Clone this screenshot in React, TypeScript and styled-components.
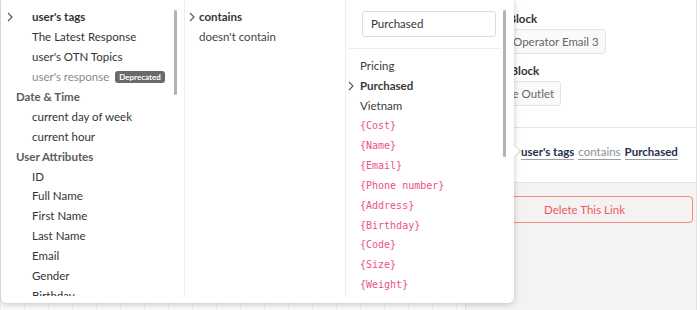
import styled, { createGlobalStyle } from "styled-components";

const GlobalStyle = createGlobalStyle`
  body {
    margin: 0;
    overflow: hidden;
    font-family: Lato, "Liberation Sans", sans-serif;
    background: #ffffff;
  }
`;

const Page = styled.div`
  position: relative;
  display: flex;
  width: 700px;
  height: 310px;
  overflow: hidden;
`;

const Canvas = styled.div`
  flex: 0 0 465px;
  background-color: #f8f8f8;
  background-image: linear-gradient(to right, #ececec 1px, transparent 1px),
    linear-gradient(to bottom, #ececec 1px, transparent 1px);
  background-size: 24px 24px;
`;

const SidePanel = styled.div`
  flex: 0 0 230px;
  display: flex;
  flex-direction: column;
  border-left: 1px solid #e2e2e2;
  border-right: 1px solid #e2e2e2;
  background: #f4f2f3;
`;

const BlockSection = styled.div`
  background: #fff;
  padding: 11px 10px 21px 12px;
  border-bottom: 1px solid #e6e6e6;
`;

const BlockLabel = styled.div<{ $gap?: number }>`
  margin-top: ${(p) => p.$gap ?? 0}px;
  font-size: 11.5px;
  line-height: 16px;
  font-weight: 700;
  color: #333;
  white-space: nowrap;
`;

const Pill = styled.div`
  display: inline-block;
  margin-top: 2px;
  padding: 0 6px;
  height: 23px;
  line-height: 23px;
  font-size: 11.5px;
  color: #666;
  background: #fafafa;
  border: 1px solid #e3e3e3;
  border-radius: 3px;
  white-space: nowrap;
`;

const ConditionRow = styled.div`
  background: #fff;
  height: 55px;
  box-sizing: border-box;
  display: flex;
  align-items: center;
  gap: 4px;
  padding: 0 0 6px 55px;
  border-bottom: 1px solid #e6e6e6;
  font-size: 11.5px;
`;

const Token = styled.span<{ $muted?: boolean }>`
  color: ${(p) => (p.$muted ? "#8b8f96" : "#25304a")};
  font-weight: ${(p) => (p.$muted ? 400 : 700)};
  border-bottom: 1px solid #9aa0aa;
  line-height: 15px;
`;

const ActionArea = styled.div`
  padding: 13px 3px 0 10px;
`;

const DeleteButton = styled.button`
  width: 100%;
  height: 27px;
  border: 1px solid #f08a80;
  border-radius: 4px;
  background: transparent;
  color: #ea5b5b;
  font-family: Lato, "Liberation Sans", sans-serif;
  font-size: 11.5px;
`;

const Popover = styled.div`
  position: absolute;
  left: 1px;
  top: -3px;
  width: 513px;
  height: 306px;
  display: flex;
  background: #fff;
  border-radius: 6px;
  box-shadow: 0 1px 6px rgba(0, 0, 0, 0.22);
`;

const Arrow = styled.div`
  position: absolute;
  right: -5px;
  top: 149px;
  width: 9px;
  height: 9px;
  background: #fff;
  transform: rotate(45deg);
  border-top: 1px solid #d8d8d8;
  border-right: 1px solid #d8d8d8;
`;

const Column = styled.div<{ $width: number; $divider?: boolean }>`
  position: relative;
  flex: 0 0 ${(p) => p.$width}px;
  height: 299px;
  overflow: hidden;
  border-right: ${(p) => (p.$divider ? "1px solid #eeeeee" : "none")};
`;

const ScrollThumb = styled.div<{ $top: number; $height: number; $right: number }>`
  position: absolute;
  right: ${(p) => p.$right}px;
  top: ${(p) => p.$top}px;
  width: 3px;
  height: ${(p) => p.$height}px;
  background: #b3b3b3;
  border-radius: 2px;
`;

const List = styled.div<{ $top: number }>`
  padding-top: ${(p) => p.$top}px;
`;

const Row = styled.div<{ $indent: number; $tone?: string; $bold?: boolean }>`
  position: relative;
  display: flex;
  align-items: center;
  gap: 6px;
  height: 19.9px;
  padding-left: ${(p) => p.$indent}px;
  font-size: 11.5px;
  color: ${(p) => p.$tone ?? "#333"};
  font-weight: ${(p) => (p.$bold ? 700 : 400)};
  white-space: nowrap;
`;

const Caret = styled.svg<{ $left: number }>`
  position: absolute;
  left: ${(p) => p.$left}px;
  top: 5px;
`;

const Badge = styled.span`
  display: inline-block;
  padding: 0 4px;
  height: 12px;
  line-height: 12px;
  font-size: 8px;
  font-weight: 700;
  color: #fff;
  background: #6a6a6a;
  border-radius: 3px;
`;

const Code = styled.span`
  font-family: "DejaVu Sans Mono", "Liberation Mono", monospace;
  font-size: 10px;
  color: #ec4f8c;
`;

const SearchWrap = styled.div`
  padding: 14px 6px 11px 14px;
  border-bottom: 1px solid #eeeeee;
  margin: 0 12px 0 2px;
`;

const SearchInput = styled.div`
  box-sizing: border-box;
  width: 134px;
  height: 26px;
  line-height: 24px;
  padding-left: 8px;
  border: 1px solid #dcdcdc;
  border-radius: 3px;
  font-size: 11.5px;
  color: #333;
`;

const CaretIcon = ({ left }: { left: number }) => (
  <Caret $left={left} width="6" height="10" viewBox="0 0 6 10">
    <path d="M1 1l4 4-4 4" fill="none" stroke="#555" strokeWidth="1.1" />
  </Caret>
);

type Entry = {
  label: string;
  kind: "header" | "item";
  bold?: boolean;
  selected?: boolean;
  deprecated?: boolean;
};

const attributes: Entry[] = [
  { label: "user's tags", kind: "item", bold: true, selected: true },
  { label: "The Latest Response", kind: "item" },
  { label: "user's OTN Topics", kind: "item" },
  { label: "user's response", kind: "item", deprecated: true },
  { label: "Date & Time", kind: "header" },
  { label: "current day of week", kind: "item" },
  { label: "current hour", kind: "item" },
  { label: "User Attributes", kind: "header" },
  { label: "ID", kind: "item" },
  { label: "Full Name", kind: "item" },
  { label: "First Name", kind: "item" },
  { label: "Last Name", kind: "item" },
  { label: "Email", kind: "item" },
  { label: "Gender", kind: "item" },
  { label: "Birthday", kind: "item" },
];

const values = ["Pricing", "Purchased", "Vietnam"];
const variables = ["Cost", "Name", "Email", "Phone number", "Address", "Birthday", "Code", "Size", "Weight"];

export default function App() {
  return (
    <>
      <GlobalStyle />
      <Page>
        <Canvas />
        <SidePanel>
          <BlockSection>
            <BlockLabel>Email Block</BlockLabel>
            <Pill>Send Operator Email 3</Pill>
            <BlockLabel $gap={9}>Menu Block</BlockLabel>
            <Pill>Simple Outlet</Pill>
          </BlockSection>
          <ConditionRow>
            <Token>user's tags</Token>
            <Token $muted>contains</Token>
            <Token>Purchased</Token>
          </ConditionRow>
          <ActionArea>
            <DeleteButton>Delete This Link</DeleteButton>
          </ActionArea>
        </SidePanel>

        <Popover>
          <Column $width={183} $divider>
            <ScrollThumb $top={13} $height={85} $right={7} />
            <List $top={10}>
              {attributes.map((a) => (
                <Row
                  key={a.label}
                  $indent={a.kind === "header" ? 15 : 31}
                  $bold={a.bold || a.kind === "header"}
                  $tone={a.kind === "header" ? "#5c5c5c" : a.deprecated ? "#8a8a8a" : "#333"}
                >
                  {a.selected && <CaretIcon left={6} />}
                  {a.label}
                  {a.deprecated && <Badge>Deprecated</Badge>}
                </Row>
              ))}
            </List>
          </Column>

          <Column $width={160} $divider>
            <List $top={10}>
              <Row $indent={14} $bold>
                <CaretIcon left={4} />
                contains
              </Row>
              <Row $indent={14} $tone="#444">
                doesn't contain
              </Row>
            </List>
          </Column>

          <Column $width={168}>
            <ScrollThumb $top={13} $height={147} $right={8} />
            <SearchWrap>
              <SearchInput>Purchased</SearchInput>
            </SearchWrap>
            <List $top={7}>
              {values.map((v) => (
                <Row key={v} $indent={14} $bold={v === "Purchased"} $tone="#3a3a3a">
                  {v === "Purchased" && <CaretIcon left={2} />}
                  {v}
                </Row>
              ))}
              {variables.map((v) => (
                <Row key={v} $indent={14}>
                  <Code>{`{${v}}`}</Code>
                </Row>
              ))}
            </List>
          </Column>
          <Arrow />
        </Popover>
      </Page>
    </>
  );
}
